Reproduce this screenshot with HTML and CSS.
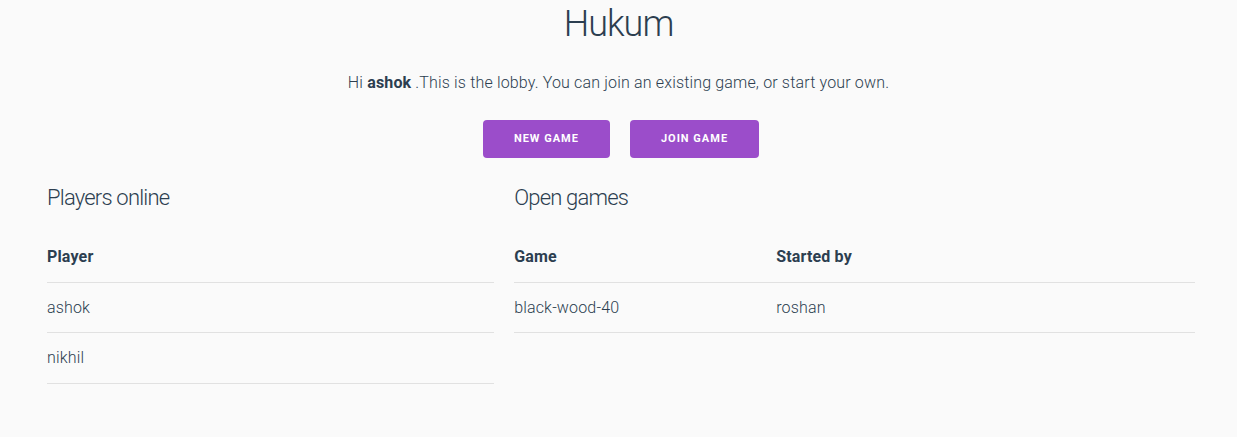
FILE: index.html
```html
<!DOCTYPE html>
<html>
<head>
<meta charset="utf-8">
<title>Hukum</title>
<link rel="stylesheet" href="styles.css">
</head>
<body>
<div class="app">
  <header class="top">
    <h1 class="title">Hukum</h1>
    <p class="intro">Hi <strong>ashok</strong> .This is the lobby. You can join an existing game, or start your own.</p>
    <div class="actions">
      <button class="btn">New game</button>
      <button class="btn">Join game</button>
    </div>
  </header>
  <div class="row">
    <section class="col col-40">
      <h4 class="section-title">Players online</h4>
      <table class="tbl">
        <thead><tr><th>Player</th></tr></thead>
        <tbody>
          <tr><td>ashok</td></tr>
          <tr><td>nikhil</td></tr>
        </tbody>
      </table>
    </section>
    <section class="col col-60">
      <h4 class="section-title">Open games</h4>
      <table class="tbl tbl-fixed">
        <thead><tr><th class="c-game">Game</th><th>Started by</th></tr></thead>
        <tbody>
          <tr><td class="c-game">black-wood-40</td><td>roshan</td></tr>
        </tbody>
      </table>
    </section>
  </div>
</div>
</body>
</html>
```

FILE: styles.css
```css
html, body {
  margin: 0;
  padding: 0;
}
body {
  background: #fafafa;
  color: #2c3e50;
  font-family: Roboto, "Liberation Sans", sans-serif;
  font-weight: 300;
  font-size: 16px;
  line-height: 1.6;
  letter-spacing: 0.01em;
}
.top {
  text-align: center;
  padding-top: 2px;
}
.title {
  font-size: 36px;
  font-weight: 300;
  line-height: 45px;
  letter-spacing: -1px;
  margin: 0;
}
.intro {
  margin: 23px 0 0;
  line-height: 25.6px;
}
.intro strong {
  font-weight: 700;
}
.actions {
  display: flex;
  justify-content: center;
  gap: 20px;
  margin-top: 24px;
  padding-left: 5px;
}
.btn {
  height: 38px;
  padding: 0 31px;
  border: 0;
  border-radius: 4px;
  background: #9b4dca;
  color: #fff;
  font-family: Roboto, "Liberation Sans", sans-serif;
  font-size: 11px;
  font-weight: 700;
  letter-spacing: 1px;
  text-transform: uppercase;
  cursor: pointer;
}
.row {
  display: flex;
  width: 1168px;
  margin-left: 37px;
  margin-top: 25px;
}
.col {
  padding: 0 10px;
  box-sizing: border-box;
}
.col-40 { width: 40%; }
.col-60 { width: 60%; }
.section-title {
  font-size: 22px;
  font-weight: 300;
  line-height: 1.35;
  letter-spacing: -0.8px;
  margin: 0 0 20px;
}
.tbl {
  width: 100%;
  border-collapse: collapse;
  border-spacing: 0;
}
.tbl-fixed {
  table-layout: fixed;
}
.tbl th, .tbl td {
  text-align: left;
  padding: 12px 15px;
  border-bottom: 1px solid #e1e1e1;
  line-height: 25.6px;
}
.tbl th {
  font-weight: 700;
}
.tbl th:first-child, .tbl td:first-child { padding-left: 0; }
.tbl th:last-child, .tbl td:last-child { padding-right: 0; }
.c-game { width: 232px; }
```
